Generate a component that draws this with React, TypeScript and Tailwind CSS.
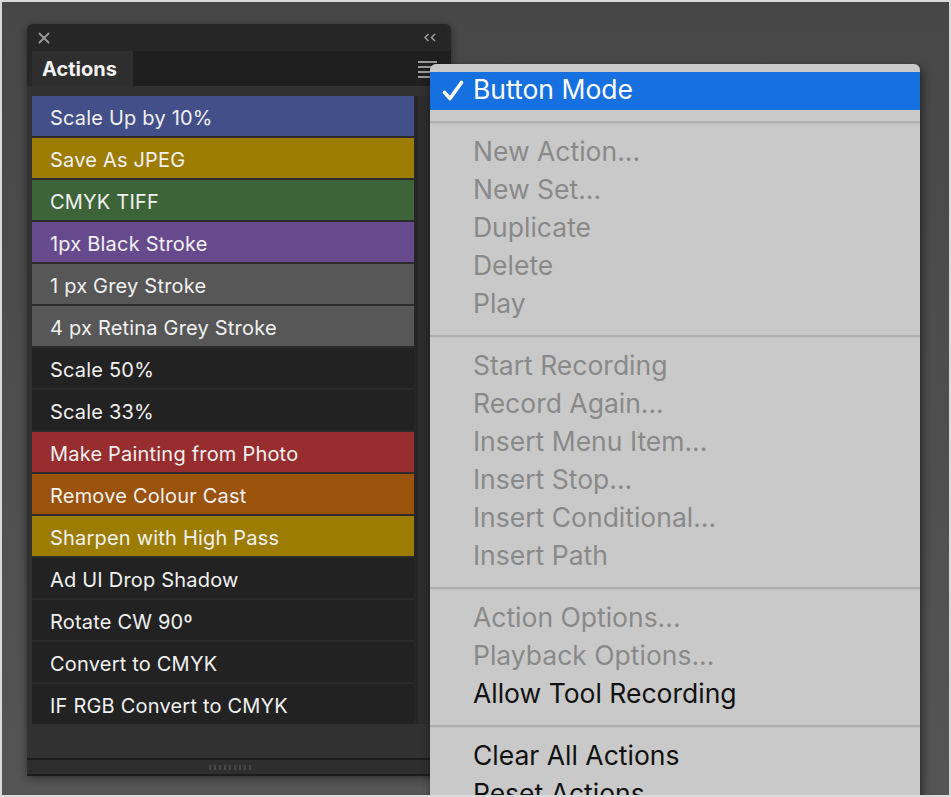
import React from "react";

type Action = { label: string; color: string };

const actions: Action[] = [
  { label: "Scale Up by 10%", color: "bg-[#434f88]" },
  { label: "Save As JPEG", color: "bg-[#9c7c02]" },
  { label: "CMYK TIFF", color: "bg-[#3d6438]" },
  { label: "1px Black Stroke", color: "bg-[#674a8e]" },
  { label: "1 px Grey Stroke", color: "bg-[#575757]" },
  { label: "4 px Retina Grey Stroke", color: "bg-[#575757]" },
  { label: "Scale 50%", color: "bg-[#222222]" },
  { label: "Scale 33%", color: "bg-[#222222]" },
  { label: "Make Painting from Photo", color: "bg-[#972d2e]" },
  { label: "Remove Colour Cast", color: "bg-[#9b520b]" },
  { label: "Sharpen with High Pass", color: "bg-[#9c7c02]" },
  { label: "Ad UI Drop Shadow", color: "bg-[#222222]" },
  { label: "Rotate CW 90º", color: "bg-[#222222]" },
  { label: "Convert to CMYK", color: "bg-[#222222]" },
  { label: "IF RGB Convert to CMYK", color: "bg-[#222222]" },
];

type MenuEntry = { label: string; enabled?: boolean } | "sep";

const menu: MenuEntry[] = [
  "sep",
  { label: "New Action..." },
  { label: "New Set..." },
  { label: "Duplicate" },
  { label: "Delete" },
  { label: "Play" },
  "sep",
  { label: "Start Recording" },
  { label: "Record Again..." },
  { label: "Insert Menu Item..." },
  { label: "Insert Stop..." },
  { label: "Insert Conditional..." },
  { label: "Insert Path" },
  "sep",
  { label: "Action Options..." },
  { label: "Playback Options..." },
  { label: "Allow Tool Recording", enabled: true },
  "sep",
  { label: "Clear All Actions", enabled: true },
  { label: "Reset Actions", enabled: true },
];

function ActionsPanel() {
  return (
    <div className="flex h-[752px] w-[424px] flex-col rounded-t-[6px] bg-[#313131] shadow-[0_2px_8px_rgba(0,0,0,0.45)]">
      {/* title bar */}
      <div className="flex h-[27px] items-center justify-between rounded-t-[6px] bg-[#262626] pl-[11px] pr-[14px]">
        <svg width="12" height="12" viewBox="0 0 12 12" className="text-[#9c9c9c]">
          <path d="M1.5 1.5l9 9M10.5 1.5l-9 9" stroke="currentColor" strokeWidth="1.8" strokeLinecap="round" />
        </svg>
        <svg width="14" height="9" viewBox="0 0 14 9" className="text-[#9c9c9c]">
          <path d="M5.5 1L2 4.5 5.5 8M12 1L8.5 4.5 12 8" stroke="currentColor" strokeWidth="1.5" fill="none" />
        </svg>
      </div>

      {/* tab row */}
      <div className="relative flex h-[35px] bg-[#1f1f1f]">
        <div className="w-[5px] bg-[#262626]" />
        <div className="flex w-[101px] items-center bg-[#2e2e2e] pl-[10px] text-[20px] font-bold text-[#f2f2f2]">
          Actions
        </div>
        <div className="absolute left-[391px] top-[10px] flex w-[19px] flex-col gap-[3px]">
          <div className="h-[2px] bg-[#9a9a9a]" />
          <div className="h-[2px] bg-[#9a9a9a]" />
          <div className="h-[2px] bg-[#9a9a9a]" />
          <div className="h-[2px] bg-[#9a9a9a]" />
        </div>
      </div>

      {/* list */}
      <div className="flex flex-1 pt-[10px]">
        <div className="ml-[5px] flex w-[382px] flex-col gap-[2px] self-start bg-[#2b2b2b]">
          {actions.map((a) => (
            <div
              key={a.label}
              className={`flex h-[40px] items-center pl-[18px] pt-[4px] text-[20px] tracking-[0.2px] text-[#f1f1f1] ${a.color}`}
            >
              {a.label}
            </div>
          ))}
        </div>
        <div className="h-[628px] w-[4px] bg-[#262626]" />
        <div className="h-[628px] w-[12px] bg-[#2c2c2c]" />
      </div>

      {/* resize strip */}
      <div className="flex h-[18px] items-center justify-center border-y-2 border-[#1c1c1c] bg-[#2e2e2e]">
        <div className="ml-[-18px] flex gap-[3px]">
          {Array.from({ length: 9 }).map((_, i) => (
            <div key={i} className="h-[5px] w-[2px] bg-[#474747]" />
          ))}
        </div>
      </div>
    </div>
  );
}

function PanelMenu() {
  return (
    <div className="absolute left-[428px] top-[62px] w-[490px] rounded-t-[6px] bg-[#c9c9c9] pb-[20px] pt-[8px] shadow-[2px_4px_10px_rgba(0,0,0,0.55)]">
      <div className="flex h-[38px] items-center bg-[#1670e0] pb-[3px] text-[26.5px] text-white">
        <div className="flex w-[43px] justify-center pl-[2px] pt-[3px]">
          <svg width="22" height="22" viewBox="0 0 22 22">
            <path d="M2.5 12.5l5.5 6L19.5 2.5" stroke="white" strokeWidth="3.6" fill="none" strokeLinecap="round" strokeLinejoin="round" />
          </svg>
        </div>
        <span>Button Mode</span>
      </div>
      {menu.map((m, i) =>
        m === "sep" ? (
          <div key={i} className="flex h-[24px] items-center">
            <div className="h-[3px] w-full border-t-2 border-[#b0b0b0] bg-[#c2c2c2]" />
          </div>
        ) : (
          <div
            key={i}
            className={`flex h-[38px] items-center pb-[3px] pl-[43px] text-[26.5px] ${
              m.enabled ? "text-[#111111]" : "text-[#898989]"
            }`}
          >
            {m.label}
          </div>
        )
      )}
    </div>
  );
}

export default function App() {
  return (
    <div className="relative h-[797px] w-[951px] overflow-hidden border-2 border-[#dadada] bg-linear-to-b from-[#474747] to-[#555555] font-['Inter','Liberation_Sans',sans-serif]">
      <div className="pl-[25px] pt-[22px]">
        <ActionsPanel />
      </div>
      <PanelMenu />
    </div>
  );
}
